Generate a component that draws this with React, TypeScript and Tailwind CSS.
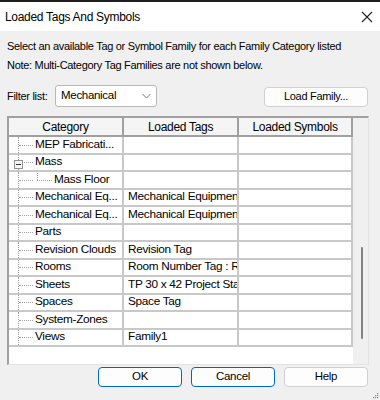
import React from "react";

type Row = { cat: string; tags?: string; level: 0 | 1; minus?: boolean };

const rows: Row[] = [
  { cat: "MEP Fabricati...", level: 0 },
  { cat: "Mass", level: 0, minus: true },
  { cat: "Mass Floor", level: 1 },
  { cat: "Mechanical Eq...", tags: "Mechanical Equipment Tag", level: 0 },
  { cat: "Mechanical Eq...", tags: "Mechanical Equipment Tag", level: 0 },
  { cat: "Parts", level: 0 },
  { cat: "Revision Clouds", tags: "Revision Tag", level: 0 },
  { cat: "Rooms", tags: "Room Number Tag : Room", level: 0 },
  { cat: "Sheets", tags: "TP 30 x 42 Project Stamp", level: 0 },
  { cat: "Spaces", tags: "Space Tag", level: 0 },
  { cat: "System-Zones", level: 0 },
  { cat: "Views", tags: "Family1", level: 0 },
];

const dotV = "border-l border-dotted border-[#a0a0a0]";
const dotH = "border-t border-dotted border-[#a0a0a0]";

export default function App() {
  return (
    <div
      className="w-[380px] h-[400px] bg-[#f0f0f0] flex flex-col overflow-hidden text-black relative"
      style={{ fontFamily: '"Liberation Sans", Arial, sans-serif' }}
    >
      <div className="h-[2px] bg-[#1e1e1e]" />
      <div className="h-[29px] bg-white flex items-center justify-between pl-[5px] pr-[8px]">
        <span className="text-[12px] tracking-[-0.3px]">Loaded Tags And Symbols</span>
        <svg width="12" height="12" viewBox="0 0 12 12" className="mr-[-1px]">
          <path d="M1 1 L11 11 M11 1 L1 11" stroke="#222" strokeWidth="1.1" />
        </svg>
      </div>
      <div className="flex flex-col px-[7px] text-[11px] tracking-[-0.3px]">
        <div className="mt-[6px] h-[18px] flex items-center">
          Select an available Tag or Symbol Family for each Family Category listed
        </div>
        <div className="mt-[1px] h-[18px] flex items-center">
          Note: Multi-Category Tag Families are not shown below.
        </div>
        <div className="mt-[11px] flex items-center h-[22px] pr-[5px]">
          <span className="w-[48px]">Filter list:</span>
          <div className="w-[102px] h-[22px] bg-white border border-[#b8b8b8] rounded-[3px] flex items-center justify-between pl-[5px] pr-[5px]">
            <span className="text-[11.5px]">Mechanical</span>
            <svg width="9" height="6" viewBox="0 0 9 6">
              <path d="M0.5 1 L4.5 5 L8.5 1" stroke="#777" fill="none" strokeWidth="1" />
            </svg>
          </div>
          <div className="flex-1" />
          <div className="w-[104px] h-[20px] mt-[1px] bg-[#fdfdfd] border border-[#d0d0d0] rounded-[4px] flex items-center justify-center text-[11px]">
            Load Family...
          </div>
        </div>
        <div className="mt-[9px] w-[362px] h-[249px] border-l-2 border-t-2 border-[#a0a0a0] border-r border-b border-r-[#e3e3e3] border-b-[#e3e3e3] bg-[#f0f0f0] flex">
          <div className="w-[344px] flex flex-col bg-white">
            <div className="flex h-[19px] bg-[#f5f5f5] border-b-2 border-[#a0a0a0] text-[12px]">
              <div className="w-[115px] border-r-2 border-[#a0a0a0] flex items-center justify-center">Category</div>
              <div className="w-[115px] border-r-2 border-[#a0a0a0] flex items-center justify-center">Loaded Tags</div>
              <div className="w-[114px] border-r-2 border-[#a0a0a0] flex items-center justify-center">Loaded Symbols</div>
            </div>
            {rows.map((r, i) => (
              <div key={i} className="flex h-[17.5px] text-[11.8px] border-b-2 border-[#c8c8c8]">
                <div className="w-[115px] border-r-2 border-[#c8c8c8] flex items-stretch relative overflow-hidden whitespace-nowrap">
                  <div className="w-[10px] relative shrink-0">
                    <div className={`absolute left-[9px] top-0 bottom-[-2px] ${dotV}`} />
                  </div>
                  <div className="w-[15px] relative shrink-0">
                    <div className={`absolute left-0 right-[1px] top-1/2 ${dotH}`} />
                    {r.minus && (
                      <div className="absolute left-[-5px] top-[5px] w-[9px] h-[9px] border border-[#919191] bg-[#f5f5f5] flex items-center justify-center">
                        <div className="w-[5px] h-[1px] bg-[#333]" />
                      </div>
                    )}
                  </div>
                  {r.level === 1 && (
                    <div className="w-[19px] relative shrink-0">
                      <div className={`absolute left-[3px] top-[-2px] h-[calc(50%+2px)] ${dotV}`} />
                      <div className={`absolute left-[3px] right-[1px] top-1/2 ${dotH}`} />
                    </div>
                  )}
                  <span className="flex items-center pl-[1px]">{r.cat}</span>
                </div>
                <div className="w-[115px] border-r-2 border-[#c8c8c8] flex items-center pl-[4px] overflow-hidden whitespace-nowrap">
                  {r.tags ?? ""}
                </div>
                <div className="w-[114px] border-r-2 border-[#c8c8c8]" />
              </div>
            ))}
            <div className="flex-1" />
          </div>
          <div className="flex-1 relative">
            <div className="absolute left-[8px] top-[129px] w-[2px] h-[92px] bg-[#858585] rounded-full" />
          </div>
        </div>
        <div className="mt-[2px] flex justify-end gap-[9px] pr-[5px]">
          <div className="w-[84px] h-[20px] bg-[#fdfdfd] border border-[#0067c0] rounded-[4px] flex items-center justify-center text-[11.5px]">OK</div>
          <div className="w-[84px] h-[20px] bg-[#fdfdfd] border border-[#0067c0] rounded-[4px] flex items-center justify-center text-[11.5px]">Cancel</div>
          <div className="w-[84px] h-[20px] bg-[#fdfdfd] border border-[#d0d0d0] rounded-[4px] flex items-center justify-center text-[11.5px]">Help</div>
        </div>
      </div>
      <svg className="absolute right-[1px] bottom-[1px]" width="7" height="7" viewBox="0 0 7 7">
        <rect x="5" y="1" width="1.2" height="1.2" fill="#888" />
        <rect x="3" y="3" width="1.2" height="1.2" fill="#888" />
        <rect x="5" y="3" width="1.2" height="1.2" fill="#888" />
        <rect x="1" y="5" width="1.2" height="1.2" fill="#888" />
        <rect x="3" y="5" width="1.2" height="1.2" fill="#888" />
        <rect x="5" y="5" width="1.2" height="1.2" fill="#888" />
      </svg>
    </div>
  );
}
